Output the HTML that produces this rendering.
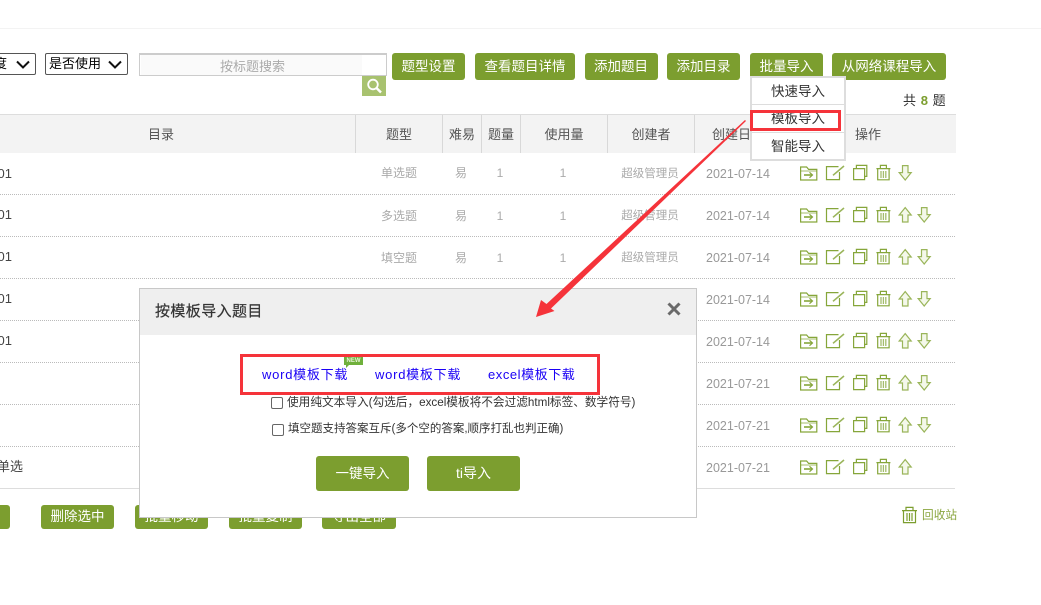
<!DOCTYPE html>
<html lang="zh-CN">
<head>
<meta charset="utf-8">
<title>题目管理</title>
<style>
html,body{margin:0;padding:0;background:#fff;}
body{width:1041px;height:605px;overflow:hidden;position:relative;font-family:"Liberation Sans","Noto Sans CJK SC",sans-serif;font-size:13px;color:#333;}
.a{position:absolute;white-space:nowrap;}
.c{position:absolute;white-space:nowrap;text-align:center;transform:translateX(-50%);}
.btn{position:absolute;top:53px;height:27px;line-height:27px;background:#7c9e2f;color:#fff;border-radius:3px;text-align:center;font-size:13.5px;}
.bb{position:absolute;top:505px;height:24px;line-height:24px;background:#7c9e2f;color:#fff;border-radius:3px;text-align:center;font-size:13.5px;}
.sel{position:absolute;top:53px;height:20px;border:1px solid #555;border-radius:2px;background:#fff;color:#000;line-height:19px;font-size:13px;box-sizing:content-box;overflow:hidden;}
.th{position:absolute;top:115px;height:38px;line-height:39px;text-align:center;color:#555;font-size:13px;border-right:1px solid #d8d8d8;box-sizing:border-box;}
.dot{position:absolute;left:0;width:955px;height:0;border-top:1px dotted #bbb;}
.t{color:#aaa;font-size:12px;line-height:16px;}
.s{color:#aaa;font-size:11.5px;line-height:16px;}
.d{color:#999;font-size:12.5px;line-height:16px;}
.m{color:#444;font-size:13px;line-height:16px;}
.item{position:absolute;left:2px;width:92px;text-align:center;color:#333;font-size:13.5px;height:26px;line-height:27px;}
.lnk{position:absolute;top:367px;color:#1a00f5;font-size:13px;letter-spacing:.75px;line-height:16px;white-space:nowrap;}
.cb{position:absolute;width:10px;height:10px;border:1px solid #666;border-radius:2px;background:#fff;}
.mb{position:absolute;top:456px;height:35px;line-height:35px;background:#7c9e2f;color:#fff;border-radius:3px;text-align:center;font-size:13.5px;}
</style>
</head>
<body>
<div class="a" style="left:0;top:28px;width:1041px;height:1px;background:#f3f3f3;"></div>

<!-- filters -->
<div class="sel" style="left:-20px;width:54px;"><span class="a" style="left:13px;top:0;">度</span>
<svg class="a" style="left:34px;top:6px;" width="16" height="10"><path d="M2 1.5L8 7.5l6-6" fill="none" stroke="#111" stroke-width="2"/></svg></div>
<div class="sel" style="left:45px;width:81px;"><span class="a" style="left:3px;top:0;">是否使用</span>
<svg class="a" style="left:61px;top:6px;" width="16" height="10"><path d="M2 1.5L8 7.5l6-6" fill="none" stroke="#111" stroke-width="2"/></svg></div>
<div class="a" style="left:139px;top:53px;width:248px;height:23px;border:1px solid #ccc;border-top-width:2px;box-sizing:border-box;background:#fff;"></div>
<div class="a" style="left:141px;top:55px;width:221px;height:20px;background:#fafafa;"></div>
<div class="a" style="left:220px;top:59px;color:#aaa;font-size:13px;line-height:16px;">按标题搜索</div>
<div class="a" style="left:362px;top:76px;width:24px;height:20px;background:#a8c26f;"></div>
<svg class="a" style="left:362px;top:76px;" width="24" height="20"><circle cx="11" cy="8.5" r="4.8" fill="none" stroke="#fff" stroke-width="1.8"/><path d="M14.5 12l4.5 4.5" stroke="#fff" stroke-width="2.4"/></svg>

<!-- toolbar buttons -->
<div class="btn" style="left:392px;width:73px;">题型设置</div>
<div class="btn" style="left:475px;width:100px;">查看题目详情</div>
<div class="btn" style="left:585px;width:73px;text-indent:-1px;">添加题目</div>
<div class="btn" style="left:667px;width:73px;">添加目录</div>
<div class="btn" style="left:750px;width:73px;">批量导入</div>
<div class="btn" style="left:832px;width:114px;">从网络课程导入</div>

<div class="a" style="left:903px;top:93px;font-size:13px;line-height:16px;color:#333;word-spacing:1.1px;">共 <b style="color:#7c9e2f;">8</b> 题</div>

<!-- table head -->
<div class="a" style="left:0;top:114px;width:956px;height:39px;background:#f3f3f3;border-top:1px solid #ddd;box-sizing:border-box;"></div>
<div class="th" style="left:0;width:356px;">&nbsp;</div>
<div class="c" style="left:161px;top:127px;color:#555;line-height:16px;">目录</div>
<div class="th" style="left:356px;width:87px;">题型</div>
<div class="th" style="left:443px;width:39px;">难易</div>
<div class="th" style="left:482px;width:39px;">题量</div>
<div class="th" style="left:521px;width:87px;">使用量</div>
<div class="th" style="left:608px;width:87px;">创建者</div>
<div class="th" style="left:695px;width:87px;">创建日期</div>
<div class="th" style="left:782px;width:172px;border-right:0;">操作</div>

<!-- row separators -->
<div class="dot" style="top:194px;"></div>
<div class="dot" style="top:236px;"></div>
<div class="dot" style="top:278px;"></div>
<div class="dot" style="top:320px;"></div>
<div class="dot" style="top:362px;"></div>
<div class="dot" style="top:404px;"></div>
<div class="dot" style="top:446px;"></div>
<div class="a" style="left:0;top:488px;width:955px;height:1px;background:#ddd;"></div>

<!-- row names -->
<div class="a m" style="left:-8px;top:166px;width:20px;text-align:right;">01</div>
<div class="a m" style="left:-8px;top:207px;width:20px;text-align:right;">01</div>
<div class="a m" style="left:-8px;top:249px;width:20px;text-align:right;">01</div>
<div class="a m" style="left:-8px;top:291px;width:20px;text-align:right;">01</div>
<div class="a m" style="left:-8px;top:333px;width:20px;text-align:right;">01</div>
<div class="a m" style="left:-10px;top:459px;width:33px;text-align:right;">单选</div>

<!-- row data -->
<div class="c t" style="left:399px;top:165px;">单选题</div><div class="c t" style="left:461px;top:165px;">易</div><div class="c t" style="left:500px;top:165px;">1</div><div class="c t" style="left:563px;top:165px;">1</div><div class="c s" style="left:650px;top:166px;">超级管理员</div>
<div class="c t" style="left:399px;top:208px;">多选题</div><div class="c t" style="left:461px;top:208px;">易</div><div class="c t" style="left:500px;top:208px;">1</div><div class="c t" style="left:563px;top:208px;">1</div><div class="c s" style="left:650px;top:208px;">超级管理员</div>
<div class="c t" style="left:399px;top:250px;">填空题</div><div class="c t" style="left:461px;top:250px;">易</div><div class="c t" style="left:500px;top:250px;">1</div><div class="c t" style="left:563px;top:250px;">1</div><div class="c s" style="left:650px;top:250px;">超级管理员</div>

<div class="c d" style="left:738px;top:166px;">2021-07-14</div>
<div class="c d" style="left:738px;top:208px;">2021-07-14</div>
<div class="c d" style="left:738px;top:250px;">2021-07-14</div>
<div class="c d" style="left:738px;top:292px;">2021-07-14</div>
<div class="c d" style="left:738px;top:334px;">2021-07-14</div>
<div class="c d" style="left:738px;top:376px;">2021-07-21</div>
<div class="c d" style="left:738px;top:418px;">2021-07-21</div>
<div class="c d" style="left:738px;top:460px;">2021-07-21</div>

<!-- action icons -->
<svg class="a" style="left:0;top:0;" width="1041" height="605" viewBox="0 0 1041 605">
<defs>
<g id="base" fill="none" stroke="#86a63a" stroke-width="1.2">
<path d="M800.6 180V167h6l2 2.4h8.2V180z"/><path d="M800.6 171h16" stroke-width=".8"/>
<path d="M804 175h8" stroke-width="1.6"/><path d="M809.5 172.3L812.5 175l-3 2.7" stroke-width="1.2"/>
<path d="M838.5 166.6h-12v13h13V172"/><path d="M833 175.3L844 166" stroke="#9ab55a" stroke-width="1.6"/>
<path d="M853.6 168.6h11v11h-11z"/><path d="M856.4 168.4v-3h10.4v11h-2"/>
<path d="M876.4 168.6h14M880.4 168.4v-3h6v3M877.7 168.8v11h11.4v-11"/>
<path d="M881 171v7M883.4 171v7M885.8 171v7" stroke="#a5bd6c" stroke-width="1.3"/>
</g>
<path id="dn" d="M902.5 165.6h5.5v7h3.2L905.2 180l-6-7.4h3.3z" fill="#f4f8ea" stroke="#9ab55a" stroke-width="1.2"/>
<path id="up" d="M902.5 180h5.5v-7h3.2l-6-7.4-6 7.4h3.3z" fill="#f4f8ea" stroke="#9ab55a" stroke-width="1.2"/>
</defs>
<use href="#base"/><use href="#dn"/>
<g transform="translate(0,42)"><use href="#base"/><use href="#up"/><use href="#dn" x="19"/></g>
<g transform="translate(0,84)"><use href="#base"/><use href="#up"/><use href="#dn" x="19"/></g>
<g transform="translate(0,126)"><use href="#base"/><use href="#up"/><use href="#dn" x="19"/></g>
<g transform="translate(0,168)"><use href="#base"/><use href="#up"/><use href="#dn" x="19"/></g>
<g transform="translate(0,210)"><use href="#base"/><use href="#up"/><use href="#dn" x="19"/></g>
<g transform="translate(0,252)"><use href="#base"/><use href="#up"/><use href="#dn" x="19"/></g>
<g transform="translate(0,294)"><use href="#base"/><use href="#up"/></g>
<!-- recycle bin -->
<g fill="none" stroke="#7c9e2f" stroke-width="1.2">
<path d="M902 510.6h15M906 510.4v-3h7v3M903.5 510.6v12h12v-12M907 513v8M909.5 513v8M912 513v8"/>
</g>
</svg>

<!-- bottom buttons -->
<div class="bb" style="left:-40px;width:50px;"></div>
<div class="bb" style="left:41px;width:73px;">删除选中</div>
<div class="bb" style="left:135px;width:73px;">批量移动</div>
<div class="bb" style="left:229px;width:73px;">批量复制</div>
<div class="bb" style="left:322px;width:74px;">导出全部</div>
<div class="a" style="left:922px;top:508px;color:#8aa63f;font-size:11.7px;line-height:16px;">回收站</div>

<!-- dropdown -->
<div class="a" style="left:750px;top:76px;width:96px;height:85px;background:#fff;border:2px solid #ddd;box-sizing:border-box;">
  <div class="item" style="top:0;left:0;">快速导入</div>
  <div class="a" style="left:0;top:26px;width:92px;height:1px;background:#ddd;"></div>
  <div class="item" style="top:27px;left:0;">模板导入</div>
  <div class="a" style="left:0;top:54px;width:92px;height:1px;background:#ddd;"></div>
  <div class="item" style="top:55px;left:0;">智能导入</div>
</div>
<div class="a" style="left:750px;top:110px;width:91px;height:21px;border:3px solid #f5333a;box-sizing:border-box;"></div>

<!-- modal -->
<div class="a" style="left:139px;top:288px;width:558px;height:230px;background:#fff;border:1px solid #c8c8c8;box-sizing:border-box;">
  <div class="a" style="left:0;top:0;width:556px;height:46px;background:#efefef;"></div>
</div>
<div class="a" style="left:155px;top:303px;font-size:15px;line-height:18px;color:#333;letter-spacing:.4px;-webkit-text-stroke:.2px #333;">按模板导入题目</div>
<svg class="a" style="left:666px;top:301px;" width="16" height="16"><path d="M2.5 2.5l11 11M13.5 2.5l-11 11" stroke="#6a6a6a" stroke-width="3"/></svg>

<div class="a" style="left:240px;top:354px;width:360px;height:41px;border:3px solid #f5333a;box-sizing:border-box;"></div>
<div class="lnk" style="left:262px;">word模板下载</div>
<div class="lnk" style="left:375px;">word模板下载</div>
<div class="lnk" style="left:488px;letter-spacing:.55px;">excel模板下载</div>
<div class="a" style="left:344px;top:357px;width:19px;height:8px;background:#6fb03b;color:#e6f3d6;font-size:6px;line-height:8px;text-align:center;font-weight:bold;">NEW</div>
<div class="a" style="left:346px;top:365px;width:0;height:0;border-top:3px solid #6fb03b;border-right:3px solid transparent;"></div>

<div class="cb" style="left:271px;top:397px;"></div>
<div class="a" style="left:287px;top:395px;font-size:11.67px;line-height:16px;color:#333;">使用纯文本导入(勾选后，excel模板将不会过滤html标签、数学符号)</div>
<div class="cb" style="left:272px;top:424px;"></div>
<div class="a" style="left:288px;top:421px;font-size:11.5px;line-height:16px;color:#333;">填空题支持答案互斥(多个空的答案,顺序打乱也判正确)</div>

<div class="mb" style="left:316px;width:93px;">一键导入</div>
<div class="mb" style="left:427px;width:93px;font-size:14px;">ti导入</div>

<!-- annotation arrow -->
<svg class="a" style="left:0;top:0;" width="1041" height="605" viewBox="0 0 1041 605">
<polygon points="536,317 541,300 546.5,304 745,120 746,121 551,308.5 554.5,311" fill="#f5333a"/>
</svg>
</body>
</html>
